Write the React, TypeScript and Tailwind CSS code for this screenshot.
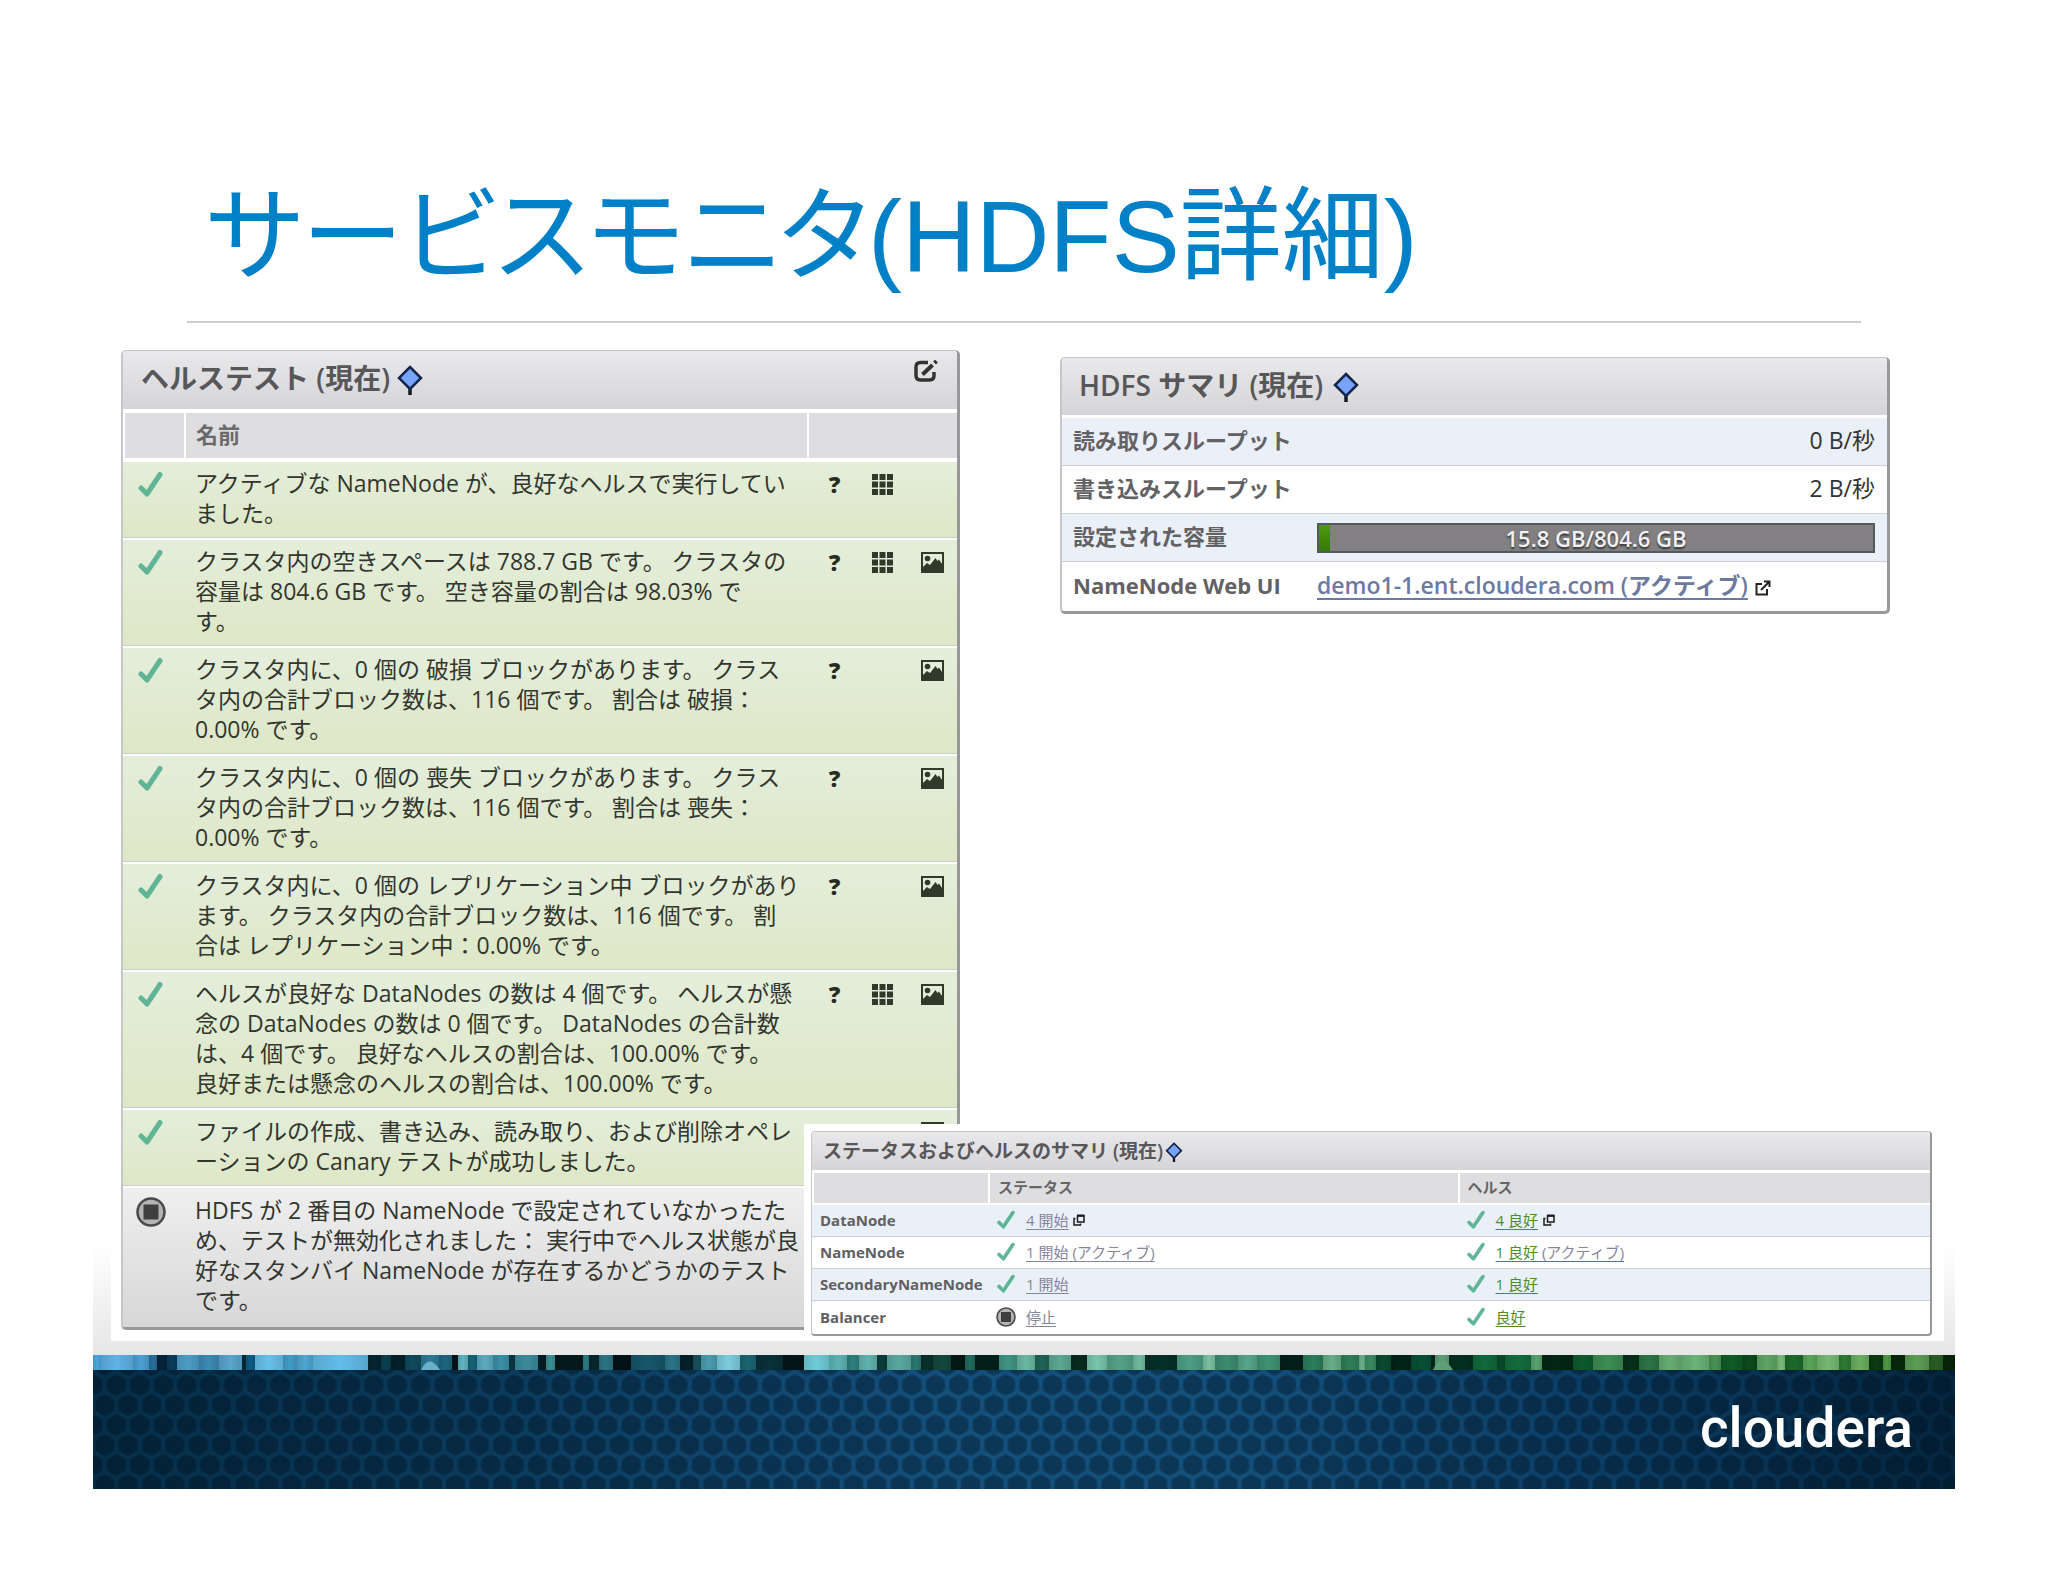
import React from 'react'

type IconProps = { className?: string }

type HealthTest = {
  status: 'ok' | 'disabled';
  lines: string[];
  actions: ('help' | 'grid' | 'chart')[];
}

const healthTests: HealthTest[] = [
  {
    status: 'ok',
    lines: ['アクティブな NameNode が、良好なヘルスで実行してい', 'ました。'],
    actions: ['help', 'grid'],
  },
  {
    status: 'ok',
    lines: ['クラスタ内の空きスペースは 788.7 GB です。 クラスタの', '容量は 804.6 GB です。 空き容量の割合は 98.03% で', 'す。'],
    actions: ['help', 'grid', 'chart'],
  },
  {
    status: 'ok',
    lines: ['クラスタ内に、0 個の 破損 ブロックがあります。 クラス', 'タ内の合計ブロック数は、116 個です。 割合は 破損：', '0.00% です。'],
    actions: ['help', 'chart'],
  },
  {
    status: 'ok',
    lines: ['クラスタ内に、0 個の 喪失 ブロックがあります。 クラス', 'タ内の合計ブロック数は、116 個です。 割合は 喪失：', '0.00% です。'],
    actions: ['help', 'chart'],
  },
  {
    status: 'ok',
    lines: ['クラスタ内に、0 個の レプリケーション中 ブロックがあり', 'ます。 クラスタ内の合計ブロック数は、116 個です。 割', '合は レプリケーション中：0.00% です。'],
    actions: ['help', 'chart'],
  },
  {
    status: 'ok',
    lines: ['ヘルスが良好な DataNodes の数は 4 個です。 ヘルスが懸', '念の DataNodes の数は 0 個です。 DataNodes の合計数', 'は、4 個です。 良好なヘルスの割合は、100.00% です。', '良好または懸念のヘルスの割合は、100.00% です。'],
    actions: ['help', 'grid', 'chart'],
  },
  {
    status: 'ok',
    lines: ['ファイルの作成、書き込み、読み取り、および削除オペレ', 'ーションの Canary テストが成功しました。'],
    actions: ['chart'],
  },
  {
    status: 'disabled',
    lines: ['HDFS が 2 番目の NameNode で設定されていなかったた', 'め、テストが無効化されました： 実行中でヘルス状態が良', '好なスタンバイ NameNode が存在するかどうかのテスト', 'です。'],
    actions: [],
  },
];

const roles = [
  { name: 'DataNode', stopped: false, state: '4 開始', health: '4 良好', note: '', popup: true },
  { name: 'NameNode', stopped: false, state: '1 開始', health: '1 良好', note: ' (アクティブ)', popup: false },
  { name: 'SecondaryNameNode', stopped: false, state: '1 開始', health: '1 良好', note: '', popup: false },
  { name: 'Balancer', stopped: true, state: '停止', health: '良好', note: '', popup: false },
];

// [start, colour] of every slat in the photo band above the footer
const slats: [number, string][] = [
  [0, '#4ba6dc'], [8, '#5fb2e6'], [40, '#4c9fd2'], [56, '#2a6f9e'], [64, '#05243a'], [74, '#0a3c5c'], [84, '#4d9cc6'], [106, '#3c8ab5'],
  [126, '#59a5cb'], [149, '#06283a'], [153, '#0e5a86'], [162, '#67c0ea'], [190, '#429cc8'], [204, '#4fa6d2'], [220, '#62bdea'],
  [275, '#04252f'], [288, '#0a3f4c'], [298, '#03202a'], [312, '#0f4a5c'], [328, '#2c7a96'], [346, '#1e6680'], [359, '#02141c'],
  [365, '#5fb3bf'], [375, '#156274'], [384, '#5aaac0'], [400, '#3c8fa6'], [416, '#0a3540'], [422, '#3b8b9d'], [445, '#021c24'],
  [453, '#3b8d95'], [462, '#041a1e'], [490, '#2a7a84'], [496, '#06262c'], [506, '#2b7482'], [520, '#021216'], [538, '#16566a'],
  [572, '#2b7488'], [587, '#04202a'], [600, '#17505a'], [608, '#4b9cae'], [624, '#7ccbdc'], [647, '#1b6470'], [663, '#083038'],
  [690, '#02161a'], [711, '#6fccd8'], [736, '#5db2b4'], [754, '#2e7f7c'], [766, '#5fb3ae'], [784, '#0b3c3c'], [794, '#59a8a0'],
  [818, '#2a7870'], [828, '#0a302c'], [840, '#14483f'], [858, '#031814'], [872, '#1f6a5f'], [882, '#04201b'], [906, '#3f9484'],
  [924, '#69b7a2'], [942, '#1e6456'], [956, '#5ca893'], [978, '#08291f'], [994, '#79c4ac'], [1014, '#55a288'], [1040, '#6fbb9f'],
  [1052, '#043029'], [1084, '#4c9e84'], [1110, '#7ac0a2'], [1122, '#3d8c70'], [1145, '#56a68a'], [1164, '#3f9274'], [1187, '#03201a'],
  [1210, '#2b7d5c'], [1230, '#66ad86'], [1248, '#2e7e58'], [1266, '#68b08a'], [1272, '#3a8a62'], [1283, '#0a4a30'], [1298, '#022417'],
  [1318, '#065036'], [1338, '#04271a'], [1342, '#5f9f78'], [1356, '#023020'], [1380, '#0f6a3c'], [1404, '#0a4a2a'], [1412, '#136c3e'],
  [1438, '#57a06e'], [1449, '#032614'], [1480, '#0e5a2e'], [1500, '#3c8c54'], [1530, '#06301a'], [1546, '#2c7446'], [1566, '#67ac74'],
  [1588, '#6bb279'], [1616, '#479354'], [1628, '#0f5a26'], [1650, '#0a4a1c'], [1664, '#5fa566'], [1684, '#7bbb7a'], [1692, '#1d6a2c'],
  [1710, '#5aa55a'], [1724, '#76b872'], [1746, '#2d7a33'], [1758, '#6aae60'], [1776, '#0b3a10'], [1790, '#4f9745'], [1798, '#06280a'],
  [1812, '#5c9c54'], [1836, '#2a5e26'], [1850, '#072408'],
];
const bandWidth = 1862;

const CheckIcon = ({ className }: IconProps) => (
  <svg className={className} viewBox="0 0 25 26" fill="none" role="img" aria-label="良好">
    <path d="M3 17L9 23L22 3.500" stroke="#5fb595" strokeWidth="5" strokeLinecap="round" strokeLinejoin="round" />
  </svg>
);

const StopIcon = ({ className }: IconProps) => (
  <svg className={className} viewBox="0 0 30 30" role="img" aria-label="停止">
    <circle cx="15" cy="15" r="13.500" fill="#b4b4b4" stroke="#4a4a4a" strokeWidth="2.500" />
    <rect x="7.500" y="7.500" width="15" height="15" fill="#3f3f3f" />
  </svg>
);

const PinIcon = ({ className }: IconProps) => (
  <svg className={className} viewBox="0 0 26 30" aria-hidden="true">
    <path d="M13 22V30" stroke="#101820" strokeWidth="3.500" />
    <path d="M13 2L24 13L13 24L2 13Z" fill="#78a3fb" stroke="#14264a" strokeWidth="2.500" />
  </svg>
);

const EditIcon = ({ className }: IconProps) => (
  <svg className={className} viewBox="0 0 24 22" fill="none" stroke="#333" aria-hidden="true">
    <path d="M14 2.500H6.500Q2 2.500 2 7V15.500Q2 20 6.500 20H15.500Q20 20 20 15.500V12" strokeWidth="3.500" />
    <path d="M8.500 14.500L18.500 5" strokeWidth="4" />
    <path d="M20.500 3L22.500 1" strokeWidth="4" />
  </svg>
);

const GridIcon = ({ className }: IconProps) => (
  <svg className={className} viewBox="0 0 21 21" fill="#2f3a2b" aria-hidden="true">
    {[0, 7.5, 15].map((y) => [0, 7.5, 15].map((x) => <rect key={`${x}-${y}`} x={x} y={y} width="6" height="6" />))}
  </svg>
);

const ChartIcon = ({ className }: IconProps) => (
  <svg className={className} viewBox="0 0 23 21" aria-hidden="true">
    <rect x="1" y="1" width="21" height="19" fill="none" stroke="#2f3a2b" strokeWidth="2" />
    <circle cx="6.500" cy="6.500" r="2.800" fill="#2f3a2b" />
    <path d="M2 20V15L6 11L9 13L14.500 6L16.500 9L18 7.500L21 12V20Z" fill="#2f3a2b" />
  </svg>
);

const ExternalIcon = ({ className }: IconProps) => (
  <svg className={className} viewBox="0 0 16 16" fill="none" stroke="#222" strokeWidth="2" aria-hidden="true">
    <path d="M7 4H1.500V14.500H12V9" />
    <path d="M6 10L14 2M9 1.500H14.500V7" />
  </svg>
);

const PopupIcon = ({ className }: IconProps) => (
  <svg className={className} viewBox="0 0 12 12" fill="none" stroke="#1c1c1c" aria-hidden="true">
    <rect x="4.500" y="2" width="6.500" height="6" strokeWidth="1.500" />
    <path d="M4 1.500H11.500" strokeWidth="2" />
    <path d="M2.500 4.500H1V11H7.500V9.500" strokeWidth="1.500" />
  </svg>
);

const panelClass = 'bg-white rounded-[5px] overflow-hidden border-t border-l-2 border-[#c6c6ca] border-r-[3px] border-b-[3px] border-r-[#98989a] border-b-[#98989a]';

const HealthTestPanel = () => (
  <section className={`mt-[27px] ${panelClass}`}>
    <header className="flex items-center h-[58px] pb-[4px] pl-[18px] pr-[19px] bg-linear-to-b from-[#e9e8eb] to-[#d5d4d7]">
      <h2 className="text-[28px] leading-[40px] font-semibold text-[#57575a] whitespace-nowrap">ヘルステスト (現在)</h2>
      <PinIcon className="w-[26px] h-[30px] ml-[7px] mt-[4px]" />
      <button type="button" aria-label="編集" className="ml-auto self-start mt-[9px]"><EditIcon className="w-[24px] h-[22px]" /></button>
    </header>
    <table className="w-full border-separate border-spacing-0 table-fixed">
      <thead>
        <tr className="h-[51px] text-left text-[22px] leading-[30px] text-[#6a6a6c]">
          <th className="w-[62px] bg-[#dedde0] border-t-4 border-l-2 border-r border-white border-b-2"></th>
          <th className="bg-[#dedde0] border-t-4 border-l border-white border-b-2 pl-[10px] pb-[4px] font-semibold">名前</th>
          <th className="w-[150px] bg-[#dedde0] border-t-4 border-l-2 border-white border-b-2"></th>
        </tr>
      </thead>
      <tbody>
        {healthTests.map((test, i) => {
          const cell = test.status === 'ok'
            ? 'align-top border-t-2 border-t-white border-b border-b-[#c9ccc8] pt-[6px] pb-[9px] bg-linear-to-b from-[#e4eedb] to-[#dee7c6]'
            : 'align-top border-t-2 border-t-white pt-[7px] pb-[12px] bg-linear-to-b from-[#efefef] to-[#d7d7d7]';
          return (
            <tr key={i}>
              <td className={cell}>
                {test.status === 'ok'
                  ? <CheckIcon className="w-[25px] h-[26px] ml-[15px] mt-[3px]" />
                  : <StopIcon className="w-[30px] h-[30px] ml-[13px] mt-[2px]" />}
              </td>
              <td className={`${cell} pl-[10px] text-[23px] leading-[30px] text-[#32362f] whitespace-nowrap`}>
                {test.lines.map((line) => <p key={line}>{line}</p>)}
              </td>
              <td className={cell}>
                <div className="grid grid-cols-3 h-[32px] -mb-[2px] items-center justify-items-center">
                  {test.actions.includes('help') ? <button type="button" aria-label="ヘルプ" className="pl-[5px] text-[23px] leading-[30px] font-extrabold text-[#262c22]">?</button> : <span />}
                  {test.actions.includes('grid') ? <button type="button" aria-label="詳細"><GridIcon className="w-[21px] h-[21px]" /></button> : <span />}
                  {test.actions.includes('chart') ? <button type="button" aria-label="グラフ"><ChartIcon className="w-[23px] h-[21px]" /></button> : <span />}
                </div>
              </td>
            </tr>
          );
        })}
      </tbody>
    </table>
  </section>
);

const SummaryPanel = () => {
  const used = 15.8;
  const total = 804.6;
  const label = 'pl-[11px] pb-[3px] text-left font-semibold text-[#626265] whitespace-nowrap border-b border-[#cfd0d4]';
  const value = 'pr-[12px] border-b border-[#cfd0d4]';
  return (
    <section className={`mt-[34px] self-start ${panelClass}`}>
      <header className="flex items-center h-[57px] pb-[3px] pl-[17px] bg-linear-to-b from-[#e9e8eb] to-[#d5d4d7]">
        <h2 className="text-[28px] leading-[40px] font-semibold text-[#57575a] whitespace-nowrap">HDFS サマリ (現在)</h2>
        <PinIcon className="w-[26px] h-[30px] ml-[10px] mt-[4px]" />
      </header>
      <table className="w-full mt-[3px] border-separate border-spacing-0 table-fixed text-[22px] leading-[30px]">
        <tbody>
          <tr className="h-[48px] bg-[#eaeff8]">
            <th scope="row" className={`${label} w-[255px]`}>読み取りスループット</th>
            <td className={`${value} pb-[3px] text-right text-[23px] text-[#333]`}>0 B/秒</td>
          </tr>
          <tr className="h-[48px]">
            <th scope="row" className={label}>書き込みスループット</th>
            <td className={`${value} pb-[3px] text-right text-[23px] text-[#333]`}>2 B/秒</td>
          </tr>
          <tr className="h-[48px] bg-[#eaf0f7]">
            <th scope="row" className={label}>設定された容量</th>
            <td className={value}>
              <div className="relative h-[30px] border-2 border-[#565859] bg-[#828083] text-center text-[22px] leading-[26px] font-semibold text-[#f2f2f2] text-shadow-[0_2px_2px_#333]">
                <div className="absolute inset-y-0 left-0 bg-linear-to-b from-[#4f9a12] to-[#357a00]" style={{ width: `${(used / total) * 100}%` }} />
                <span className="relative">15.8 GB/804.6 GB</span>
              </div>
            </td>
          </tr>
          <tr className="h-[49px]">
            <th scope="row" className="pl-[11px] pb-[3px] text-left font-bold text-[#626265] whitespace-nowrap">NameNode Web UI</th>
            <td className="pb-[3px] whitespace-nowrap">
              <a href="#namenode" className="text-[23px] font-semibold text-[#6d7a9f] underline underline-offset-4 decoration-2">demo1-1.ent.cloudera.com (アクティブ)</a>
              <ExternalIcon className="inline w-[16px] h-[16px] ml-[7px]" />
            </td>
          </tr>
        </tbody>
      </table>
    </section>
  );
};

const StatusPanel = () => (
  <section className="absolute left-[693px] right-0 bottom-0 bg-white pt-[7px] pl-[7px] pr-[12px] pb-[5px]">
    <div className="bg-white rounded-[4px] overflow-hidden border-t border-l border-[#c6c6ca] border-r-2 border-b-2 border-r-[#98989a] border-b-[#98989a]">
      <header className="flex items-center h-[38px] pb-[1px] pl-[11px] bg-linear-to-b from-[#e9e8eb] to-[#d5d4d7]">
        <h2 className="text-[19px] leading-[24px] font-semibold text-[#57575a] whitespace-nowrap">ステータスおよびヘルスのサマリ (現在)</h2>
        <PinIcon className="w-[18px] h-[20px] ml-[2px] mt-[3px]" />
      </header>
      <table className="w-full border-separate border-spacing-0 table-fixed text-[15px] leading-[20px]">
        <thead>
          <tr className="h-[35px] text-left text-[#666]">
            <th className="w-[176px] bg-[#dedde0] border-t-3 border-l-2 border-b-2 border-white"></th>
            <th className="w-[42%] bg-[#dedde0] border-t-3 border-l-2 border-b-2 border-white pl-[8px] pb-[2px] font-semibold">ステータス</th>
            <th className="bg-[#dedde0] border-t-3 border-l-2 border-b-2 border-white pl-[8px] pb-[2px] font-semibold">ヘルス</th>
          </tr>
        </thead>
        <tbody>
          {roles.map((role) => (
            <tr key={role.name} className="h-[32px] last:h-[33px] odd:bg-[#eaf0f8] [&>*]:pb-[2px] [&>*]:border-b [&>*]:border-[#cfd0d4] last:[&>*]:border-b-0">
              <th scope="row" className="pl-[8px] text-left font-bold text-[#606063]">{role.name}</th>
              <td className="pl-[8px]">
                <div className="flex items-center">
                  {role.stopped ? <StopIcon className="w-[20px] h-[20px]" /> : <CheckIcon className="w-[20px] h-[19px]" />}
                  <a href="#status" className="ml-[10px] text-[#86869a] underline underline-offset-3">{role.state}{role.note}</a>
                  {role.popup && <PopupIcon className="w-[12px] h-[12px] ml-[5px]" />}
                </div>
              </td>
              <td className="pl-[8px]">
                <div className="flex items-center">
                  <CheckIcon className="w-[20px] h-[19px]" />
                  <a href="#health" className="ml-[10px] text-[#4f8a2c] underline underline-offset-3">{role.health}<span className="text-[#86869a]">{role.note}</span></a>
                  {role.popup && <PopupIcon className="w-[12px] h-[12px] ml-[5px]" />}
                </div>
              </td>
            </tr>
          ))}
        </tbody>
      </table>
    </div>
  </section>
);

const Footer = () => (
  <footer>
    <svg className="block w-full h-[15px]" viewBox={`0 0 ${bandWidth} 15`} preserveAspectRatio="none" aria-hidden="true">
      <defs>
        <linearGradient id="blend" x1="0" x2="1" y1="0" y2="0">
          <stop offset="0" stopColor="#000" stopOpacity="0.12" />
          <stop offset="0.5" stopColor="#000" stopOpacity="0" />
          <stop offset="1" stopColor="#000" stopOpacity="0.12" />
        </linearGradient>
      </defs>
      {slats.map(([x, color], i) => {
        const end = i + 1 < slats.length ? slats[i + 1][0] : bandWidth;
        return (
          <g key={x}>
            <rect x={x} y="0" width={end - x + 1} height="15" fill={color} />
            <rect x={x} y="0" width={end - x} height="15" fill="url(#blend)" />
          </g>
        );
      })}
      <path d="M328 15Q336 -2 347 15Z" fill="#6ab0cc" />
      <path d="M1340 15Q1348 -4 1360 15Z" fill="#5f9f78" />
    </svg>
    <div className="relative h-[119px] flex items-center justify-end pr-[42px] bg-[linear-gradient(to_right,#052e48,#0b3c5e_22%,#14507c_45%,#14507c_62%,#0b3d64_82%,#04263f)]">
      <svg className="absolute inset-0 w-full h-full" aria-hidden="true">
        <defs>
          <pattern id="hex" width="23.400" height="40" patternUnits="userSpaceOnUse" y="-5">
            <g fill="#020c18" fillOpacity="0.2">
              <path d="M-10 14.300L0 8.500L10 14.300V25.700L0 31.500L-10 25.700Z" />
              <path d="M13.400 14.300L23.400 8.500L33.400 14.300V25.700L23.400 31.500L13.400 25.700Z" />
              <path d="M1.700 34.300L11.700 28.500L21.700 34.300V45.700L11.700 51.500L1.700 45.700Z" />
              <path d="M1.700 -5.700L11.700 -11.500L21.700 -5.700V5.700L11.700 11.500L1.700 5.700Z" />
            </g>
            <g fill="#020c18" fillOpacity="0.24">
              <circle cx="0" cy="20" r="9.500" />
              <circle cx="23.400" cy="20" r="9.500" />
              <circle cx="11.700" cy="40" r="9.500" />
              <circle cx="11.700" cy="0" r="9.500" />
            </g>
          </pattern>
        </defs>
        <rect width="100%" height="100%" fill="url(#hex)" />
      </svg>
      <span className="relative pb-[4px] font-['Roboto','Liberation_Sans',sans-serif] font-medium text-[55px] leading-[70px] text-white">cloudera</span>
    </div>
  </footer>
);

const App = () => (
  <main className="bg-white pt-[177px] pb-[93px] px-[93px] font-['Open_Sans','Noto_Sans_CJK_JP',sans-serif]">
    <h1 className="mx-[94px] pl-[19px] pb-[24px] text-[102px] leading-[120px] border-b-2 border-[#cdcdd2] text-[#0080c6] font-normal whitespace-nowrap font-['Liberation_Sans','Noto_Sans_CJK_JP',sans-serif] [font-feature-settings:'palt']">
      サービスモニタ(HDFS詳細)
    </h1>
    <div className="pl-[18px] pr-[11px] pb-[14px] bg-[linear-gradient(to_top,#e6e6e7,#fff_110px)]">
      <div className="relative grid grid-cols-[839fr_830fr] gap-[100px] bg-white pl-[10px] pr-[54px] pb-[11px]">
        <HealthTestPanel />
        <SummaryPanel />
        <StatusPanel />
      </div>
    </div>
    <Footer />
  </main>
);

export default App
